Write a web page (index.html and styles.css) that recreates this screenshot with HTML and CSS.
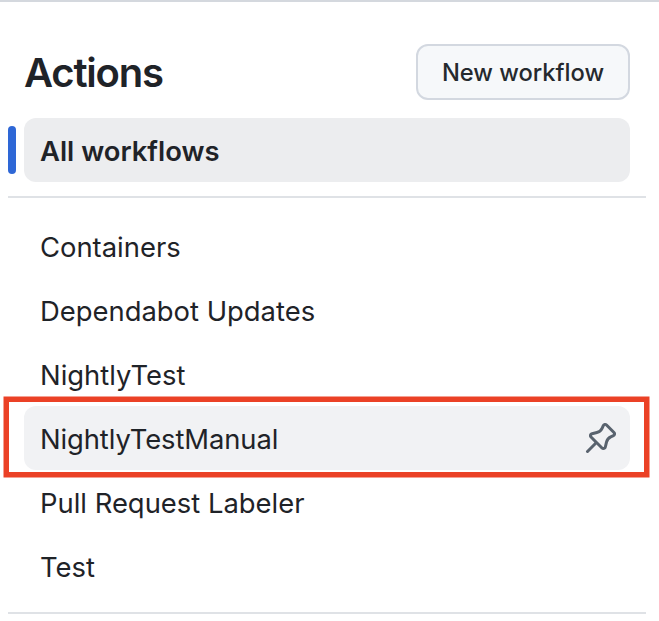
FILE: index.html
```html
<!DOCTYPE html>
<html lang="en">
<head>
<meta charset="utf-8">
<title>Actions</title>
<link rel="stylesheet" href="styles.css">
</head>
<body>
<aside class="sidebar">
  <header class="header">
    <h1 class="title">Actions</h1>
    <button class="button" type="button">New workflow</button>
  </header>
  <nav>
    <a class="item item-active"><span class="label">All workflows</span></a>
    <hr class="divider">
    <ul class="list">
      <li class="item"><span class="label">Containers</span></li>
      <li class="item"><span class="label">Dependabot Updates</span></li>
      <li class="item"><span class="label">NightlyTest</span></li>
      <li class="item item-hover"><span class="label label-tight">NightlyTestManual</span>
        <svg class="pin" viewBox="0 0 16 16" width="32" height="32" aria-hidden="true"><path d="m11.294.984 3.722 3.722a1.75 1.75 0 0 1-.504 2.826l-1.327.613a3.089 3.089 0 0 0-1.707 2.084l-.584 2.454c-.317 1.332-1.972 1.8-2.94.832L5.75 11.311 1.78 15.28a.749.749 0 1 1-1.06-1.06l3.969-3.97-2.204-2.204c-.968-.968-.5-2.623.832-2.94l2.454-.584a3.08 3.08 0 0 0 2.084-1.707l.613-1.327a1.75 1.75 0 0 1 2.826-.504ZM6.283 9.723l2.732 2.731a.25.25 0 0 0 .42-.119l.584-2.454a4.586 4.586 0 0 1 2.537-3.098l1.328-.613a.25.25 0 0 0 .072-.404l-3.722-3.722a.25.25 0 0 0-.404.072l-.613 1.328a4.584 4.584 0 0 1-3.098 2.537l-2.454.584a.25.25 0 0 0-.119.42l2.731 2.732Z"/></svg>
      </li>
      <li class="item"><span class="label">Pull Request Labeler</span></li>
      <li class="item"><span class="label">Test</span></li>
    </ul>
    <hr class="divider">
  </nav>
</aside>
</body>
</html>
```
FILE: styles.css
```css
* { box-sizing: border-box; }
body {
  margin: 0;
  background: #fff;
  color: #1f2328;
  font: 27.4px/42px Inter, sans-serif;
}
.sidebar {
  height: 621px;
  padding: 42px 13px 0 8px;
  border-top: 2px solid #d4d8de;
  overflow: hidden;
}
.header {
  display: flex;
  align-items: center;
  justify-content: space-between;
  height: 56px;
  margin: 0 16px 18px;
}
.title { margin: 0; padding-top: 2px; font-size: 40px; font-weight: 600; line-height: 56px; letter-spacing: -1.2px; }
.button {
  width: 214px;
  height: 56px;
  padding: 2px 0 0;
  border: 2px solid #d3d8e0;
  border-radius: 12px;
  background: #f6f8fa;
  color: #25292e;
  font: 500 23.7px/40px Inter, sans-serif;
}
.item {
  position: relative;
  display: flex;
  align-items: center;
  justify-content: space-between;
  height: 64px;
  margin: 0 16px;
  padding: 0 13px 0 16px;
  border-radius: 12px;
}
.label { padding-top: 2px; }
.label-tight { letter-spacing: -0.1px; }
.item-active { background: #ecedef; font-weight: 600; }
.item-active::before {
  content: "";
  position: absolute;
  left: -16px;
  top: 8px;
  width: 8px;
  height: 48px;
  border-radius: 12px;
  background: #2e67d6;
}
.divider { height: 2px; margin: 14px 0 16px; border: 0; background: #dfe2e6; }
.list { margin: 0; padding: 0; list-style: none; }
.item-hover { background: #f1f2f4; }
.item-hover::after {
  content: "";
  position: absolute;
  inset: -9px -19px -7px -20px;
  border: 5px solid #eb4126;
  box-shadow: 0 0 0 0.5px #eb4126;
}
.pin { fill: #59636e; }
```
